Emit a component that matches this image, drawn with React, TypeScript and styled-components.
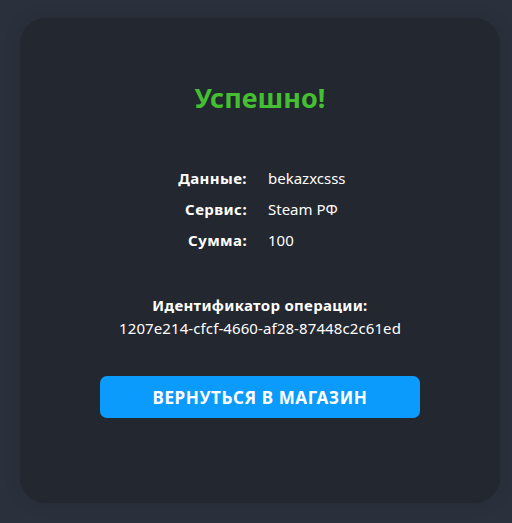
import React from "react";
import styled, { createGlobalStyle } from "styled-components";

const Global = createGlobalStyle`
  html, body { margin: 0; padding: 0; background: #2b313c; }
  body { font-family: "Noto Sans", "Open Sans", sans-serif; }
  #root { min-height: 523px; }
`;

const Page = styled.div`
  box-sizing: border-box;
  width: 512px;
  height: 523px;
  padding: 18px 12px 20px 20px;
  background: #2b313c;
`;

const Card = styled.div`
  box-sizing: border-box;
  width: 480px;
  height: 485px;
  background: #23272f;
  border-radius: 26px;
  box-shadow: 0 0 18px rgba(0, 0, 0, 0.12);
  display: flex;
  flex-direction: column;
  align-items: center;
  padding-top: 63px;
  color: #ffffff;
`;

const Title = styled.h1`
  margin: 0;
  font-size: 27px;
  line-height: 34px;
  font-weight: 700;
  color: #44bf31;
  letter-spacing: 0;
`;

const Details = styled.div`
  margin-top: 53px;
  display: grid;
  grid-template-columns: 227px 1fr;
  column-gap: 21px;
  row-gap: 10px;
  width: 100%;
`;

const Label = styled.div`
  text-align: right;
  font-size: 15px;
  line-height: 21px;
  font-weight: 700;
  letter-spacing: 0.4px;
`;

const Value = styled.div`
  font-size: 15px;
  line-height: 21px;
  font-weight: 400;
`;

const OperationBlock = styled.div`
  margin-top: 44px;
  display: flex;
  flex-direction: column;
  align-items: center;
  gap: 2px;
`;

const OpLabel = styled.div`
  font-size: 15px;
  line-height: 21px;
  font-weight: 700;
  letter-spacing: 0.3px;
`;

const OpValue = styled.div`
  font-size: 15px;
  line-height: 21px;
  font-weight: 400;
  letter-spacing: 0.1px;
`;

const Button = styled.button`
  margin-top: 37px;
  width: 320px;
  height: 42px;
  border: none;
  border-radius: 7px;
  background: #0a9bfd;
  color: #ffffff;
  font-family: inherit;
  font-size: 17px;
  font-weight: 700;
  letter-spacing: 0.6px;
  cursor: pointer;
`;

const rows: [string, string][] = [
  ["Данные:", "bekazxcsss"],
  ["Сервис:", "Steam РФ"],
  ["Сумма:", "100"],
];

export default function App() {
  return (
    <>
      <Global />
      <Page>
        <Card>
          <Title>Успешно!</Title>
          <Details>
            {rows.map(([l, v]) => (
              <React.Fragment key={l}>
                <Label>{l}</Label>
                <Value>{v}</Value>
              </React.Fragment>
            ))}
          </Details>
          <OperationBlock>
            <OpLabel>Идентификатор операции:</OpLabel>
            <OpValue>1207e214-cfcf-4660-af28-87448c2c61ed</OpValue>
          </OperationBlock>
          <Button>ВЕРНУТЬСЯ В МАГАЗИН</Button>
        </Card>
      </Page>
    </>
  );
}
